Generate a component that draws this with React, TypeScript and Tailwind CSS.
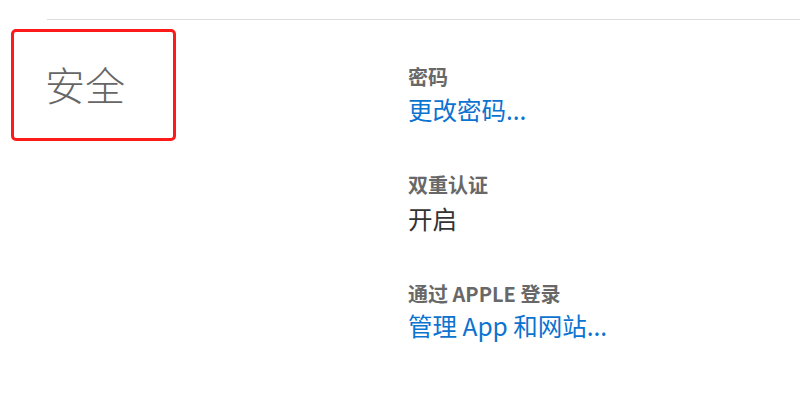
export default function App() {
  const font = { fontFamily: '"Noto Sans CJK SC", "Noto Sans", sans-serif' };

  return (
    <div className="w-[800px] h-[418px] bg-white overflow-hidden" style={font}>
      <div className="ml-[47px] mt-[19px] border-t border-[#dcdcdc]" />

      <div className="flex">
        {/* section title with highlight frame */}
        <div className="w-[408px] pl-[11px] pt-[9px] shrink-0">
          <div className="w-[165px] h-[112px] border-[3px] border-[#ff1a1a] rounded-[5px] pl-[31px] pt-[28px]">
            <h2 className="text-[40px] leading-[48px] font-light text-[#666666]">安全</h2>
          </div>
        </div>

        <div className="flex flex-col gap-[48px] pt-[44px]">
          <div className="flex flex-col gap-[6px]">
            <span className="text-[20px] leading-[26px] font-bold text-[#686868]">密码</span>
            <a className="text-[24.5px] leading-[28px] text-[#0b73d0]">更改密码...</a>
          </div>
          <div className="flex flex-col gap-[7px]">
            <span className="text-[20px] leading-[26px] font-bold text-[#686868]">双重认证</span>
            <span className="text-[24.5px] leading-[28px] text-[#333333]">开启</span>
          </div>
          <div className="flex flex-col gap-[5px]">
            <span className="text-[20px] leading-[26px] font-bold text-[#686868]">通过 APPLE 登录</span>
            <a className="text-[24.5px] leading-[28px] text-[#0b73d0]">管理 App 和网站...</a>
          </div>
        </div>
      </div>
    </div>
  );
}
